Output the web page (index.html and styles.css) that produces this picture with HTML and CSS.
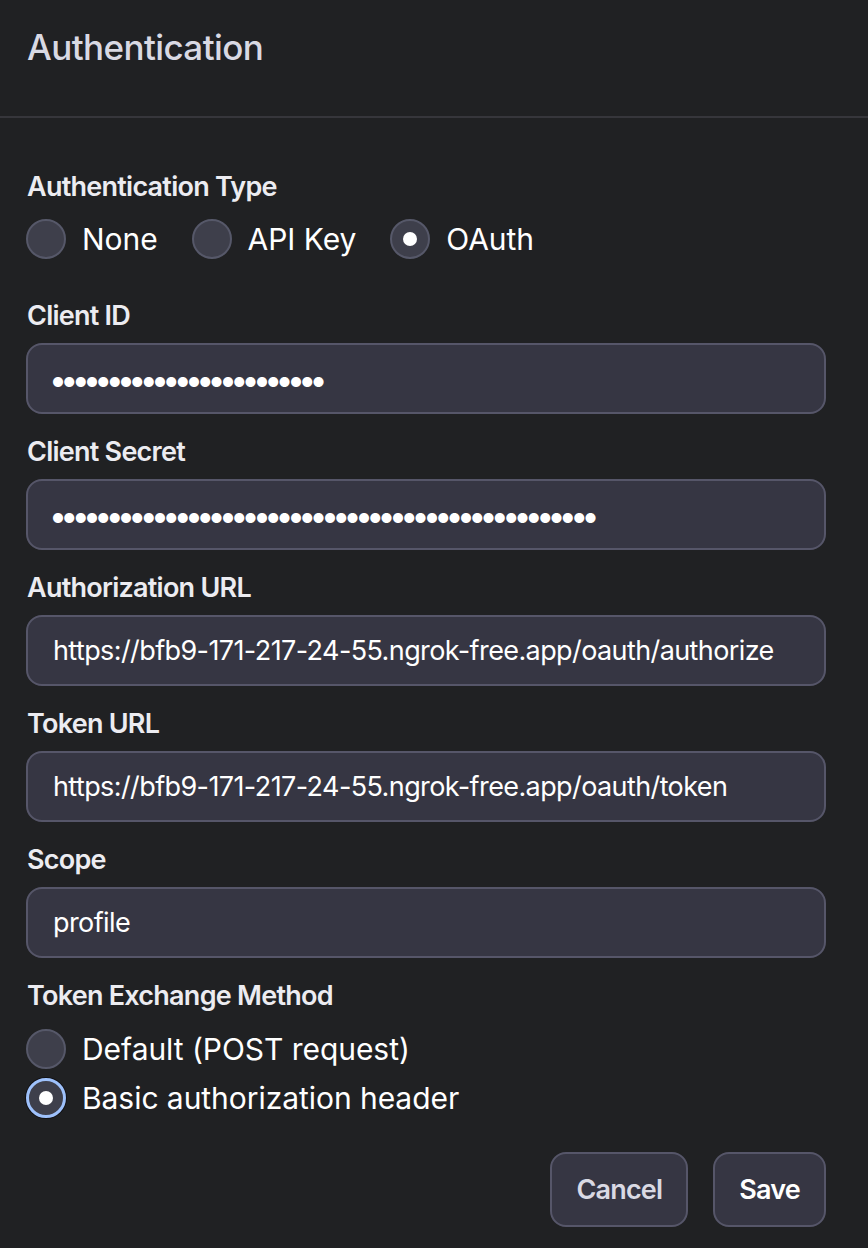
FILE: index.html
```html
<!DOCTYPE html>
<html>
<head>
<meta charset="utf-8">
<link rel="stylesheet" href="styles.css">
</head>
<body>
<div class="dialog">
  <header class="header">
    <h1 class="title">Authentication</h1>
  </header>
  <form class="content">
    <div class="group auth-type">
      <div class="label">Authentication Type</div>
      <div class="radio-row">
        <label class="radio"><span class="dot"></span><span class="rtext">None</span></label>
        <label class="radio"><span class="dot"></span><span class="rtext">API Key</span></label>
        <label class="radio"><span class="dot checked"></span><span class="rtext">OAuth</span></label>
      </div>
    </div>
    <div class="fields">
      <div class="field">
        <div class="label">Client ID</div>
        <div class="input"><span class="mask">••••••••••••••••••••••••</span></div>
      </div>
      <div class="field">
        <div class="label">Client Secret</div>
        <div class="input"><span class="mask">••••••••••••••••••••••••••••••••••••••••••••••••</span></div>
      </div>
      <div class="field">
        <div class="label">Authorization URL</div>
        <div class="input"><span class="value">https://bfb9-171-217-24-55.ngrok-free.app/oauth/authorize</span></div>
      </div>
      <div class="field">
        <div class="label">Token URL</div>
        <div class="input"><span class="value">https://bfb9-171-217-24-55.ngrok-free.app/oauth/token</span></div>
      </div>
      <div class="field">
        <div class="label">Scope</div>
        <div class="input"><span class="value">profile</span></div>
      </div>
      <div class="field">
        <div class="label">Token Exchange Method</div>
        <div class="radio-col">
          <label class="radio"><span class="dot"></span><span class="rtext">Default (POST request)</span></label>
          <label class="radio"><span class="dot checked focus"></span><span class="rtext">Basic authorization header</span></label>
        </div>
      </div>
    </div>
    <div class="actions">
      <button type="button" class="btn cancel">Cancel</button>
      <button type="button" class="btn save">Save</button>
    </div>
  </form>
</div>
</body>
</html>
```

FILE: styles.css
```css
html, body {
  margin: 0;
  padding: 0;
  background: #202123;
}
body {
  font-family: Inter, "Noto Sans", sans-serif;
  color: #ececf1;
  width: 868px;
  height: 1248px;
  overflow: hidden;
}
.dialog {
  display: flex;
  flex-direction: column;
}
.header {
  padding: 25px 27px 47px;
  border-bottom: 2px solid #36363b;
}
.title {
  margin: 0;
  font-size: 35px;
  line-height: 44px;
  font-weight: 500;
  color: #d9d9e3;
  letter-spacing: -0.6px;
}
.content {
  display: flex;
  flex-direction: column;
  padding: 49px 42px 0 26px;
}
.label {
  font-size: 27px;
  line-height: 40px;
  font-weight: 600;
  color: #ececf1;
  padding-left: 1px;
  letter-spacing: -0.75px;
}
.radio-row {
  display: flex;
  gap: 34px;
  margin-top: 12px;
}
.radio {
  display: flex;
  align-items: center;
  gap: 16px;
}
.dot {
  width: 36px;
  height: 36px;
  border-radius: 50%;
  background: #3e3f4b;
  border: 2px solid #565869;
  display: flex;
  align-items: center;
  justify-content: center;
}
.dot.checked::after {
  content: "";
  width: 14px;
  height: 14px;
  border-radius: 50%;
  background: #ffffff;
}
.dot.focus {
  border: 3px solid #9ec1fb;
  width: 34px;
  height: 34px;
  box-shadow: 0 0 0 1px #101014;
}
.rtext {
  font-size: 30px;
  line-height: 40px;
  color: #ffffff;
  letter-spacing: -0.05px;
}
.fields {
  display: flex;
  flex-direction: column;
  gap: 18px;
  margin-top: 37px;
}
.field {
  display: flex;
  flex-direction: column;
}
.input {
  margin-top: 7px;
  height: 67px;
  border: 2px solid #565669;
  border-radius: 16px;
  background: #363643;
  display: flex;
  align-items: center;
  padding: 0 25px;
  overflow: hidden;
}
.value {
  font-size: 27px;
  color: #ffffff;
  white-space: nowrap;
  letter-spacing: -0.6px;
}
.mask {
  font-size: 32px;
  line-height: 40px;
  color: #ffffff;
  white-space: nowrap;
  letter-spacing: -6.67px;
  margin-left: -4px;
  padding-top: 3px;
}
.radio-col {
  display: flex;
  flex-direction: column;
  gap: 9px;
  margin-top: 13px;
}
.actions {
  display: flex;
  justify-content: flex-end;
  gap: 25px;
  margin-top: 34px;
}
.btn {
  height: 75px;
  border: 2px solid #565669;
  border-radius: 16px;
  background: #363643;
  font-family: Inter, "Noto Sans", sans-serif;
  font-size: 27px;
  font-weight: 600;
  padding: 0 24px;
  letter-spacing: -0.8px;
}
.cancel {
  color: #d9d9e3;
}
.save {
  color: #ffffff;
}
```
